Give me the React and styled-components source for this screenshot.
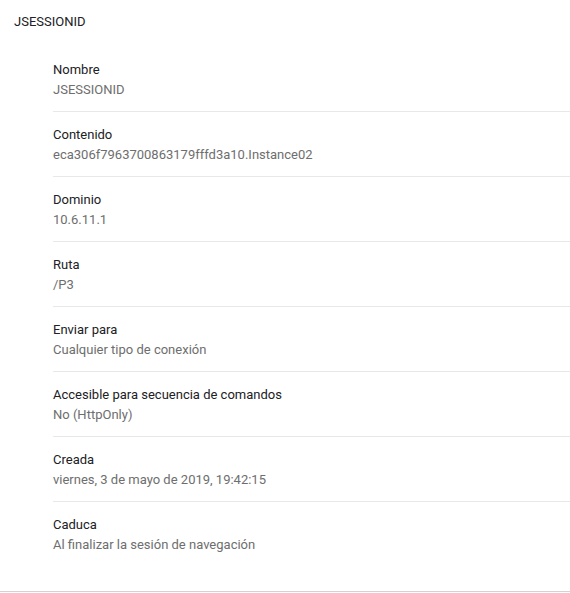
import React from 'react';
import styled, { createGlobalStyle } from 'styled-components';

const GlobalStyle = createGlobalStyle`
body {
    margin: 0;
    background: #fff;
    font-family: Roboto, "Liberation Sans", sans-serif;
    font-size: 13px;
}
`

const fields = [
    { label: 'Nombre', value: 'JSESSIONID' },
    { label: 'Contenido', value: 'eca306f7963700863179fffd3a10.Instance02' },
    { label: 'Dominio', value: '10.6.11.1' },
    { label: 'Ruta', value: '/P3' },
    { label: 'Enviar para', value: 'Cualquier tipo de conexión' },
    { label: 'Accesible para secuencia de comandos', value: 'No (HttpOnly)' },
    { label: 'Creada', value: 'viernes, 3 de mayo de 2019, 19:42:15' },
    { label: 'Caduca', value: 'Al finalizar la sesión de navegación' },
];

export default function App() {
    return (
        <Page>
            <GlobalStyle />
            <Title>JSESSIONID</Title>
            <FieldList>
                {fields.map((f, i) => (
                    <Field key={f.label} first={i === 0}>
                        <Label>{f.label}</Label>
                        <Value>{f.value}</Value>
                    </Field>
                ))}
            </FieldList>
        </Page>
    )
}

const Page = styled.div`
width: 570px;
border-bottom: 1px solid #d3d3d3;
`
const Title = styled.div`
padding: 12px 14px 15px;
line-height: 20px;
color: #202124;
`
const FieldList = styled.div`
padding-left: 53px;
padding-bottom: 25px;
`
const Field = styled.div`
padding: 13px 0 11px;
border-top: ${p => p.first ? 'none' : '1px solid #e8e8e8'};
`
const Label = styled.div`
line-height: 20px;
color: #202124;
`
const Value = styled.div`
line-height: 20px;
color: #6e6e6e;
`
